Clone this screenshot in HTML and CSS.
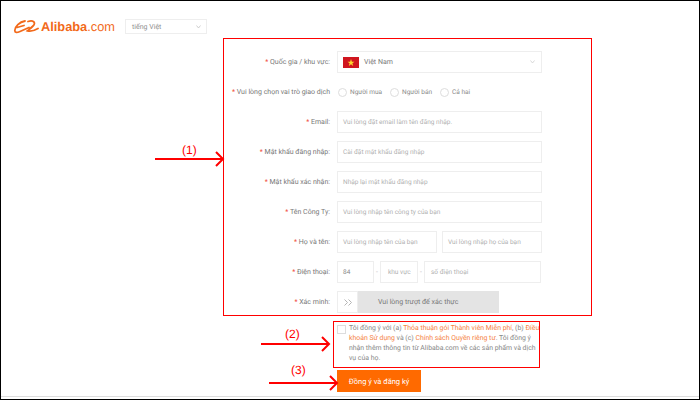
FILE: index.html
```html
<!DOCTYPE html>
<html lang="vi">
<head>
<meta charset="utf-8">
<title>Alibaba.com</title>
<link rel="stylesheet" href="styles.css">
</head>
<body>
<div class="frame">
  <header class="top">
    <div class="logo">
      <svg class="logo-mark" width="26" height="15" viewBox="0 0 26 15"><path d="M12 2C6.500 3 1.800 7.500 1.800 11.500C1.800 14 4 13.800 7 12.500L16 8.500M4 8.500L11 6.500M15 2.500C20 .8 23.500 3.500 20 7C18 9 16 10.500 14.500 11.800C18 12.800 21.500 11.500 25 9.500" fill="none" stroke="#f26a1b" stroke-width="1.800" stroke-linecap="round"/></svg>
      <span class="logo-word"><b>Alibaba</b>.com</span>
    </div>
    <div class="lang"><span>tiếng Việt</span><svg class="chev" width="5" height="4" viewBox="0 0 5 4"><path d="M.5.500L2.500 3L4.500.5" fill="none" stroke="#c4c4c4" stroke-width=".8"/></svg></div>
  </header>

  <form class="form">
    <div class="row"><label class="lab">Quốc gia / khu vực:</label>
      <div class="box country"><svg width="16" height="11" viewBox="0 0 16 11"><rect width="16" height="11" fill="#d0161f"/><path d="M8 2L8.900 4.700H11.500L9.400 6.300L10.200 9L8 7.300L5.800 9L6.600 6.300L4.500 4.700H7.100Z" fill="#ffd92e"/></svg><span class="val">Việt Nam</span><svg class="chev-end" width="5" height="4" viewBox="0 0 5 4"><path d="M.5.500L2.500 3L4.500.5" fill="none" stroke="#cfcfcf" stroke-width=".8"/></svg></div></div>
    <div class="row"><label class="lab">Vui lòng chọn vai trò giao dịch</label>
      <div class="radios"><i class="radio"></i><span>Người mua</span><i class="radio"></i><span>Người bán</span><i class="radio"></i><span>Cả hai</span></div></div>
    <div class="row"><label class="lab">Email:</label><div class="box">Vui lòng đặt email làm tên đăng nhập.</div></div>
    <div class="row"><label class="lab">Mật khẩu đăng nhập:</label><div class="box">Cài đặt mật khẩu đăng nhập</div></div>
    <div class="row"><label class="lab">Mật khẩu xác nhận:</label><div class="box">Nhập lại mật khẩu đăng nhập</div></div>
    <div class="row"><label class="lab">Tên Công Ty:</label><div class="box">Vui lòng nhập tên công ty của bạn</div></div>
    <div class="row"><label class="lab">Họ và tên:</label>
      <div class="pair"><div class="box">Vui lòng nhập tên của bạn</div><div class="box">Vui lòng nhập họ của bạn</div></div></div>
    <div class="row"><label class="lab">Điện thoại:</label>
      <div class="phone"><div class="box code">84</div><span class="dash">-</span><div class="box area">khu vực</div><span class="dash">-</span><div class="box num">số điện thoại</div></div></div>
    <div class="row"><label class="lab">Xác minh:</label>
      <div class="slider"><div class="knob"><svg width="8" height="7" viewBox="0 0 8 7"><path d="M.5.500L3.500 3.500L.5 6.500M4.500.500L7.500 3.500L4.500 6.500" fill="none" stroke="#b5b5b5"/></svg></div><span class="slide-text">Vui lòng trượt để xác thực</span></div></div>
  </form>

  <div class="agree">
    <i class="check"></i>
    <p>Tôi đồng ý với (a) <em>Thỏa thuận gói Thành viên Miễn phí</em>, (b) <em>Điều khoản Sử dụng</em> và (c) <em>Chính sách Quyền riêng tư</em>. Tôi đồng ý nhận thêm thông tin từ Alibaba.com về các sản phẩm và dịch vụ của họ.</p>
  </div>
  <div class="submit">Đồng ý và đăng ký</div>
  <div class="rule"></div>

  <div class="note n1">(1)</div>
  <svg class="arrow a1" width="70" height="16" viewBox="0 0 70 16"><path d="M0 8H68M61 1L68 8L61 15" fill="none" stroke="#f00" stroke-width="2"/></svg>
  <div class="note n2">(2)</div>
  <svg class="arrow a2" width="70" height="16" viewBox="0 0 70 16"><path d="M0 8H68M61 1L68 8L61 15" fill="none" stroke="#f00" stroke-width="2"/></svg>
  <div class="note n3">(3)</div>
  <svg class="arrow a3" width="70" height="16" viewBox="0 0 70 16"><path d="M0 8H68M61 1L68 8L61 15" fill="none" stroke="#f00" stroke-width="2"/></svg>
</div>
</body>
</html>
```
FILE: styles.css
```css
* { box-sizing: border-box; }
html, body { margin: 0; padding: 0; }
body { width: 700px; height: 400px; overflow: hidden; background: #fff; font-family: "Roboto", "Liberation Sans", sans-serif; text-rendering: geometricPrecision; }
.frame { position: relative; width: 700px; height: 400px; border: 1px solid #000; padding: 18px 0 0 12px; color: #777; font-size: 7px; }
.top { display: flex; align-items: center; height: 15px; }
.logo { display: flex; align-items: center; width: 112px; color: #f26a1b; }
.logo-mark { margin-right: 2px; flex: none; }
.logo-word { font: 400 12.800px "Liberation Sans", sans-serif; }
.logo-word b { font-weight: 700; }
.lang { display: flex; align-items: center; justify-content: space-between; width: 82px; height: 15px; border: 1px solid #eee; padding: 0 5px 0 6px; color: #8f8f8f; font-size: 7px; }
.form { position: absolute; left: 222px; top: 37px; width: 369px; height: 278px; border: 1px solid #f00; padding: 12px 0 0 0; display: flex; flex-direction: column; gap: 8px; }
.row { display: flex; align-items: center; height: 22px; }
.lab { width: 106px; margin-right: 7px; text-align: right; white-space: nowrap; color: #777; }
.lab::before { content: "* "; color: #f04b3b; }
.box { flex: none; width: 205px; height: 22px; border: 1px solid #eee; padding: 0 5px; display: flex; align-items: center; color: #b0b0b0; font-size: 6.500px; white-space: nowrap; overflow: hidden; }
.country { padding-right: 6px; color: #777; font-size: 7px; }
.val { margin-left: 5px; }
.chev-end { margin-left: auto; }
.radios { display: flex; align-items: center; color: #888; font-size: 6.500px; }
.radio { width: 9px; height: 9px; border: 1px solid #ddd; border-radius: 50%; margin: 0 3px 0 1px; }
.radios span { margin-right: 7px; }
.pair { display: flex; gap: 5px; }
.pair .box { width: 100px; }
.phone { display: flex; align-items: center; }
.code { width: 37px; color: #888; }
.area { width: 38px; padding-left: 7px; }
.num { width: 117px; padding-left: 6px; }
.dash { width: 6px; text-align: center; flex: none; color: #bbb; }
.slider { display: flex; align-items: center; width: 162px; height: 22px; background: #e4e4e4; }
.knob { display: flex; align-items: center; justify-content: center; width: 21px; height: 22px; background: #fff; border: 1px solid #eee; }
.slide-text { margin-left: 20px; color: #777; }
.agree { position: absolute; left: 332px; top: 320px; width: 207px; height: 47px; border: 1px solid #f00; padding: 1px 0 0 3px; display: flex; }
.check { flex: none; width: 9px; height: 9px; border: 1px solid #ddd; margin: 2px 3px 0 0; }
.agree p { margin: 0; width: 192px; flex: none; font-size: 6.900px; line-height: 10px; color: #888; }
.agree em { font-style: normal; color: #f5823f; }
.submit { position: absolute; left: 336px; top: 369px; width: 84px; height: 22px; background: #ff6a00; color: #fff; display: flex; align-items: center; justify-content: center; font-size: 7.500px; }
.rule { position: absolute; left: 0; right: 0; top: 395px; height: 1px; background: #ddd; }
.note { position: absolute; color: #f00; font-size: 12px; font-family: "Liberation Sans", sans-serif; }
.arrow { position: absolute; }
.n1 { left: 181px; top: 142px; }
.a1 { left: 154px; top: 150px; }
.n2 { left: 284px; top: 326px; }
.a2 { left: 260px; top: 335px; }
.n3 { left: 290px; top: 362px; }
.a3 { left: 268px; top: 374px; }
```
